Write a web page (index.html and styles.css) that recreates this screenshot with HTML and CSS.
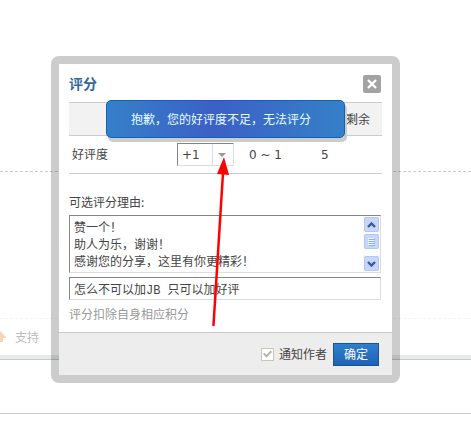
FILE: index.html
```html
<!DOCTYPE html>
<html lang="zh-CN">

<head>
    <meta charset="UTF-8">
    <meta name="viewport" content="width=device-width, initial-scale=1.0">
    <title>评分</title>
    <link rel="stylesheet" href="styles.css">
</head>

<body>
    <div class="thread">
        <div class="post"></div>
        <div class="signature"></div>
        <div class="actions">
            <svg class="up" width="6" height="12" viewBox="0 0 6 12">
                <path d="M0 0 L6 6 L6 7 L3 7 L3 11 L0 11 Z" fill="#fbd3b5"/>
            </svg>
            <a class="support" href="#">支持</a>
        </div>
        <div class="divider"></div>
        <div class="next"></div>
    </div>

    <div class="dialog">
        <form class="rate">
            <div class="content">
                <div class="head">
                    <h3>评分</h3>
                    <button type="button" class="close" aria-label="关闭">
                        <svg width="10" height="10" viewBox="0 0 10 10">
                            <path d="M1 1 L9 9 M9 1 L1 9" stroke="#fff" stroke-width="2.4"/>
                        </svg>
                    </button>
                </div>

                <table>
                    <colgroup>
                        <col class="name">
                        <col class="value">
                        <col class="range">
                        <col>
                    </colgroup>
                    <tr>
                        <th colspan="4">剩余</th>
                    </tr>
                    <tr>
                        <td><label for="score">好评度</label></td>
                        <td>
                            <div class="score">
                                <select id="score" name="score">
                                    <option>+1</option>
                                </select>
                                <svg width="8" height="4" viewBox="0 0 8 4">
                                    <path d="M0 0 H8 L4 4 Z" fill="#999"/>
                                </svg>
                            </div>
                        </td>
                        <td>0 ~ 1</td>
                        <td>5</td>
                    </tr>
                </table>

                <label class="caption" for="reasons">可选评分理由:</label>
                <div class="list">
                    <select id="reasons" size="3">
                        <option>赞一个！</option>
                        <option>助人为乐，谢谢！</option>
                        <option>感谢您的分享，这里有你更精彩！</option>
                    </select>
                    <div class="scroll">
                        <button type="button" aria-label="向上">
                            <svg width="9" height="6" viewBox="0 0 9 6">
                                <path d="M1 5 L4.500 1.500 L8 5" fill="none" stroke="#3f5a8c" stroke-width="2.400"/>
                            </svg>
                        </button>
                        <div class="thumb">
                            <svg width="7" height="8" viewBox="0 0 7 8">
                                <path d="M0 .5 H6 M0 2.500 H6 M0 4.500 H6 M0 6.500 H6" stroke="#eef4fe"/>
                                <path d="M1 1.500 H7 M1 3.500 H7 M1 5.500 H7 M1 7.500 H7" stroke="#8cb0f8"/>
                            </svg>
                        </div>
                        <button type="button" class="down" aria-label="向下">
                            <svg width="9" height="6" viewBox="0 0 9 6">
                                <path d="M1 1 L4.500 4.500 L8 1" fill="none" stroke="#3f5a8c" stroke-width="2.400"/>
                            </svg>
                        </button>
                    </div>
                </div>
                <input type="text" class="reason" name="reason" aria-label="评分理由" value="怎么不可以加JB 只可以加好评">
                <p class="hint">评分扣除自身相应积分</p>
            </div>

            <div class="foot">
                <input type="checkbox" id="notify" checked disabled>
                <label for="notify">通知作者</label>
                <button type="submit" class="ok">确定</button>
            </div>
        </form>
        <div class="tip">抱歉，您的好评度不足，无法评分</div>
        <svg class="pointer" width="20" height="170" viewBox="0 0 20 170">
            <path d="M3.500 168 L13 16" stroke="#f00" stroke-width="2.500" stroke-linecap="round"/>
            <path d="M14 0 L19 18 L7 17 Z" fill="#f00"/>
        </svg>
    </div>
</body>

</html>
```

FILE: styles.css
```css
body {
    margin: 0;
    background: #fff;
    color: #444;
    font: 12px/18px "Noto Sans CJK SC", sans-serif;
}

input,
select,
button {
    box-sizing: border-box;
    margin: 0;
    padding: 0;
    font: inherit;
    color: inherit;
}

button {
    display: flex;
    align-items: center;
    justify-content: center;
    border: none;
    cursor: pointer;
}

/* thread behind the dialog */
.post {
    height: 171px;
    border-bottom: 1px dashed #ccc;
}

.signature {
    height: 146px;
    border-bottom: 1px dashed #f6f6f6;
}

.actions {
    display: flex;
    align-items: center;
    gap: 9px;
    height: 36px;
}

.support {
    color: #bbb;
    text-decoration: none;
}

.divider {
    height: 4px;
    background: #e6ebed;
    border-bottom: 1px solid #c9c9c9;
}

.next {
    height: 53px;
    border-bottom: 1px solid #ccc;
}

/* dialog */
.dialog {
    position: absolute;
    top: 56px;
    left: 51px;
    right: 71px;
    border: 8px solid rgba(0, 0, 0, 0.2);
    border-radius: 8px;
}

.rate {
    background: #fff;
}

.content {
    padding: 11px 10px 9px;
}

.head {
    display: flex;
    justify-content: space-between;
    align-items: flex-start;
    margin-bottom: 9px;
}

h3 {
    margin: 0;
    color: #369;
    font-size: 14px;
    line-height: 16px;
}

.close {
    width: 18px;
    height: 18px;
    margin-right: 1px;
    background: #a3a3a3;
    border-radius: 2px;
}

table {
    width: 100%;
    border-collapse: collapse;
    table-layout: fixed;
}

.name {
    width: 108px;
}

.value,
.range {
    width: 72px;
}

th {
    height: 32px;
    padding: 0 12px 0 0;
    background: #f2f2f2;
    border-top: 1px solid #ccc;
    border-bottom: 1px solid #ccc;
    font-weight: normal;
    text-align: right;
}

td {
    height: 37px;
    padding: 0;
    border-bottom: 1px solid #ccc;
    font-family: "DejaVu Sans", "Noto Sans CJK SC", sans-serif;
}

td:first-child {
    padding-left: 3px;
}

.score {
    position: relative;
    width: 57px;
}

.score select {
    display: block;
    width: 100%;
    height: 23px;
    padding-left: 4px;
    appearance: none;
    background: linear-gradient(#ddd, #ddd) 34px 0 / 1px 100% no-repeat #fff;
    border: 1px solid;
    border-color: #848484 #ddd #ddd #848484;
    border-radius: 0;
}

.score svg {
    position: absolute;
    top: 10px;
    right: 8px;
    pointer-events: none;
}

.caption {
    display: block;
    margin: 19px 0 4px;
}

.list {
    display: flex;
    height: 58px;
    box-sizing: border-box;
    margin: 0 1px 4px 0;
    border: 1px solid;
    border-color: #848484 #ddd #ddd #848484;
}

.list select {
    flex: 1;
    min-width: 0;
    height: 56px;
    padding: 2px 0;
    overflow: hidden;
    background: #fff;
    border: none;
}

.list option {
    min-height: 17px;
    padding: 0 4px;
    line-height: 17px;
}

.scroll {
    display: flex;
    flex-direction: column;
    width: 17px;
    background: #fbfbfd;
}

.scroll button,
.thumb {
    display: flex;
    align-items: center;
    justify-content: center;
    box-sizing: border-box;
    height: 17px;
    background: #c6d6fc;
    border: 1px solid #fff;
    outline: 1px solid #b4c8f0;
    outline-offset: -2px;
    border-radius: 3px;
}

.scroll .down {
    margin-top: auto;
}

.reason {
    display: block;
    width: calc(100% - 1px);
    height: 23px;
    padding: 0 4px;
    background: #fff;
    border: 1px solid;
    border-color: #848484 #ddd #ddd #848484;
    font-family: "Liberation Mono", "Noto Sans CJK SC", monospace;
}

.hint {
    margin: 5px 0 0;
    color: #999;
}

.foot {
    display: flex;
    align-items: center;
    justify-content: flex-end;
    height: 42px;
    padding-right: 13px;
    background: #ededed;
    border-top: 1px solid #c8c8c8;
}

.foot input {
    width: 13px;
    height: 13px;
    margin-right: 5px;
    appearance: none;
    background: #fff;
    border: 1px solid #c9c7ba;
}

.foot input:checked::after {
    content: "";
    display: block;
    width: 3px;
    height: 6px;
    margin: 0 0 0 3px;
    border: solid #b5b5a5;
    border-width: 0 2px 2px 0;
    transform: rotate(45deg);
}

.ok {
    width: 46px;
    height: 23px;
    margin-left: 6px;
    background: linear-gradient(#2e7fcf, #1f62b4);
    border: 1px solid #1c5292;
    color: #fff;
}

.tip {
    position: absolute;
    top: 36px;
    left: 47px;
    padding: 9px 33px 9px 24px;
    background: linear-gradient(90deg, #3580c8, #3c60c6 45%, #3580c8);
    border: 1px solid #0f62b8;
    border-radius: 5px;
    box-shadow: 2px 4px 0 #ccc;
    color: #e6ffff;
    white-space: nowrap;
}

.pointer {
    position: absolute;
    top: 93px;
    left: 151px;
}
```
